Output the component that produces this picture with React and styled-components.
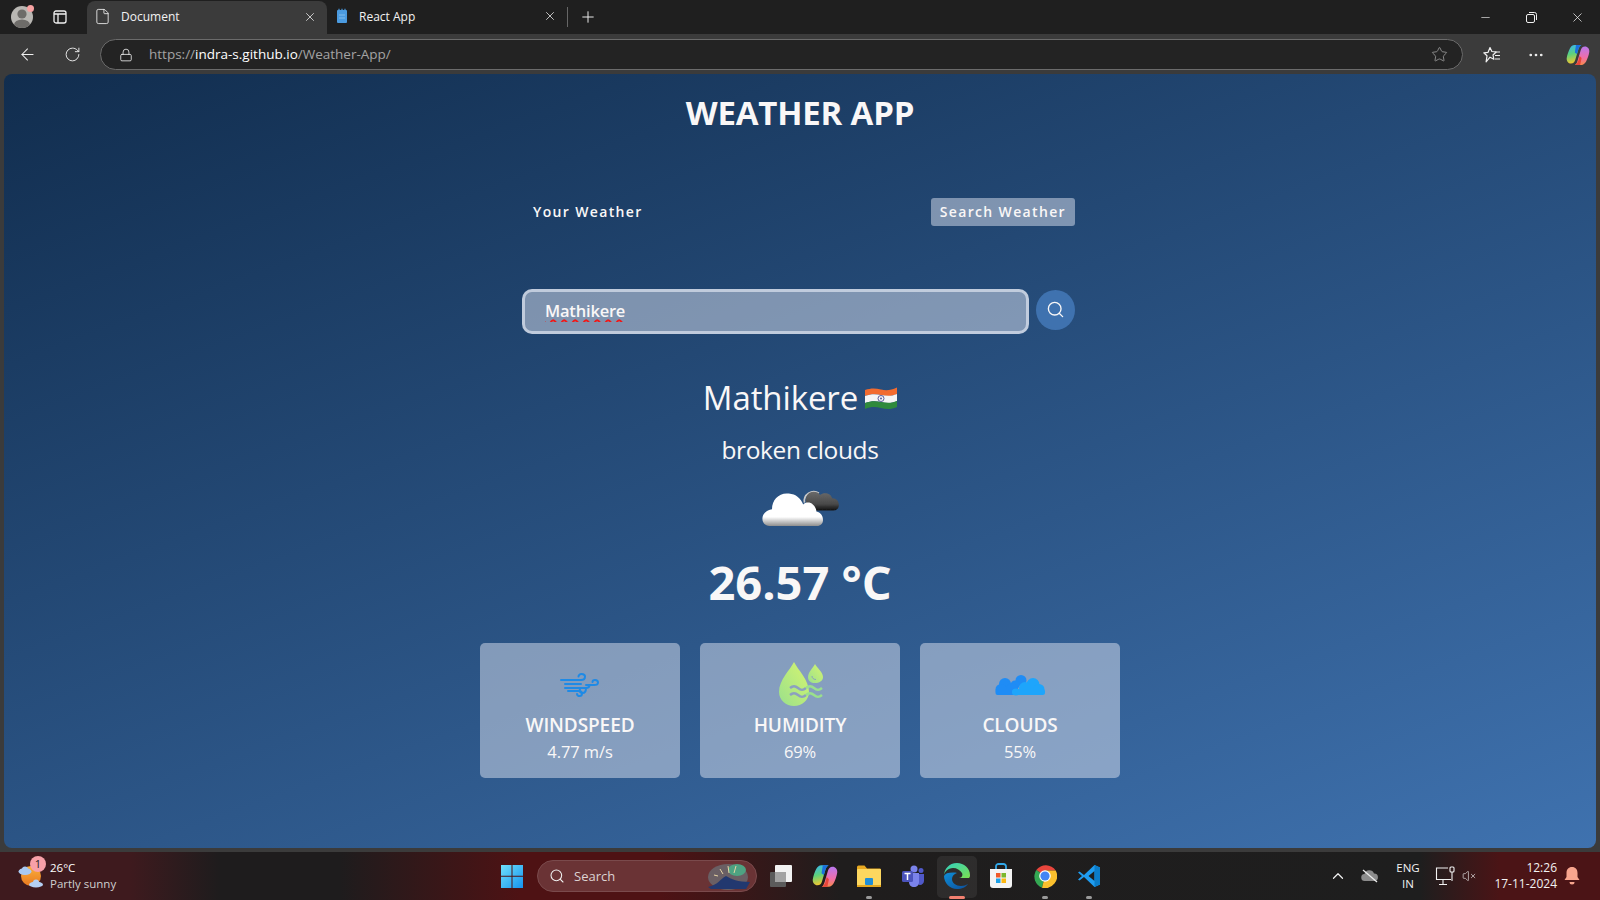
import React from "react";
import styled, { createGlobalStyle } from "styled-components";
import { ArrowLeft, RotateCw, Star, MoreHorizontal, Plus, X, Minus, Search, ChevronUp, VolumeX, File, Lock } from "lucide-react";

const Global = createGlobalStyle`
  * { box-sizing: border-box; }
  html, body { margin: 0; padding: 0; height: 100%; overflow: hidden; background: #3b3b3b; }
  body { font-family: "Open Sans", "Noto Sans", sans-serif; }
`;

const Screen = styled.div`
  width: 1600px; height: 900px; display: flex; flex-direction: column; background: #3b3b3b; color: #fff;
`;
const TabStrip = styled.div`
  height: 34px; background: #1f1f1f; display: flex; align-items: stretch; flex: none;
`;
const Avatar = styled.div`
  position: relative; width: 22px; height: 22px; margin: 6px 0 0 11px; border-radius: 50%; background: #b9b7b3; overflow: hidden; flex: none;
`;
const AvatarWrap = styled.div`position: relative; flex: none; width: 44px;`;
const AvatarDot = styled.span`
  position: absolute; left: 27px; top: 5px; width: 7px; height: 7px; border-radius: 50%; background: #f7a3a3;
`;
const IconSlot = styled.div`
  width: ${p => p.$w || 32}px; display: flex; align-items: center; justify-content: center; flex: none; color: ${p => p.$c || "#f0f0f0"};
`;
const Tab = styled.div`
  width: 240px; flex: none; display: flex; align-items: center; font-size: 12px; color: #f2f2f2; padding: 0 10px 2px ${p => p.$active ? 7 : 9}px;
  background: ${p => p.$active ? "#3b3b3b" : "transparent"}; border-radius: 8px 8px 0 0; gap: ${p => p.$active ? 10 : 11}px;
  margin-top: ${p => p.$active ? 1 : 0}px;
  span { flex: 1; }
`;
const TabSep = styled.div`width: 1px; height: 20px; background: #666; align-self: center; margin-right: 4px; flex: none;`;
const Spacer = styled.div`flex: 1;`;
const AddressRow = styled.div`
  height: 40px; flex: none; display: flex; align-items: center; padding-top: 1px; background: #3b3b3b;
`;
const AddressPill = styled.div`
  width: 1363px; height: 31px; flex: none; border-radius: 16px; border: 1px solid #6b6b6b; background: #232323; display: flex; align-items: center;
  padding: 0 14px 0 18px; font-size: 13.5px; color: #a4a4a4; margin-left: 11px;
  strong { font-weight: 400; color: #fff; }
`;
const UrlText = styled.div`flex: 1; margin-left: 16px; padding-bottom: 2px;`;

const Page = styled.main`
  flex: none; height: 774px; margin: 0 4px; border-radius: 8px; overflow: hidden; color: #f9f7f7;
  background: linear-gradient(160deg, #112d4e, #3f72af); display: flex; flex-direction: column; align-items: center;
  font-family: "Open Sans", sans-serif;
`;
const Title = styled.h1`
  margin: 20px 0 0; font-size: 33px; line-height: 38px; font-weight: 700; letter-spacing: -0.2px;
`;
const TabsRow = styled.div`
  width: 553px; margin: 66px 3px 0 0; height: 28px; display: flex; justify-content: space-between; align-items: center;
`;
const ModeTab = styled.button`
  border: 0; height: 28px; border-radius: 3px; color: #f9f7f7; font: 600 14px/28px "Open Sans", sans-serif; letter-spacing: 1.35px;
  padding: 0 9px 0 ${p => p.$active ? 9 : 11}px;
  background: ${p => p.$active ? "rgba(219,226,239,.5)" : "transparent"};
`;
const SearchForm = styled.form`
  width: 553px; margin: 63px 3px 0 0; display: flex; align-items: flex-start; gap: 7px; height: 45px;
`;
const SearchInput = styled.input`
  width: 507px; height: 45px; border-radius: 10px; border: 3px solid rgba(219,226,239,.72); background: rgba(219,226,239,.5); outline: 0; color: #f9f7f7;
  font: 600 16.5px "Open Sans", sans-serif; padding: 0 0 2px 20px; letter-spacing: -0.2px;
  text-decoration: underline wavy #f01818 1.5px; text-underline-offset: 2px;
`;
const SearchBtn = styled.button`
  width: 39px; height: 40px; margin-top: 1px; border: 0; padding: 0 0 2px 0; border-radius: 50%; background: #3f72af; color: #f9f7f7; display: flex; align-items: center; justify-content: center;
`;
const City = styled.h2`
  margin: 44px 0 0; font-size: 33px; line-height: 40px; font-weight: 400; display: flex; align-items: center; gap: 7px; letter-spacing: -0.1px;
`;
const Desc = styled.p`margin: 16px 0 0; font-size: 24.5px; line-height: 32px; letter-spacing: -0.4px;`;
const WeatherArt = styled.div`margin-top: 12px; height: 56px; display: flex;`;
const Temp = styled.p`margin: 20px 0 0; font-size: 47px; line-height: 56px; font-weight: 700; letter-spacing: 0;`;
const Cards = styled.div`margin-top: 33px; display: flex; gap: 20px;`;
const Card = styled.div`
  width: 200px; height: 135px; border-radius: 5px; background: rgba(219,226,239,.5); display: flex; flex-direction: column; align-items: center; padding-top: 17px;
`;
const CardLabel = styled.div`margin-top: 3px; font-size: 19px; line-height: 28px; font-weight: 600; letter-spacing: -0.1px;`;
const CardValue = styled.div`font-size: 16.5px; line-height: 26px; letter-spacing: -0.1px;`;

const Taskbar = styled.footer`
  margin-top: 4px; height: 48px; flex: none; display: grid; grid-template-columns: 1fr auto 1fr; align-items: center;
  background: linear-gradient(90deg, #3e1a1e 0, #3e1a1e 130px, #1e1c1d 220px, #1e1c1d 340px, #4e1214 520px, #4e1214 660px, #1f1d1d 840px, #1e1e1e 1420px, #4b1416 1500px, #4b1416 1600px);
  font-family: "Open Sans", sans-serif;
`;
const Widget = styled.div`display: flex; align-items: center; padding-left: 18px; gap: 6px;`;
const WidgetIcon = styled.div`position: relative; width: 26px; height: 28px;`;
const Badge = styled.span`
  position: absolute; left: 12px; top: -6px; width: 16px; height: 16px; border-radius: 50%; background: #f7a0a8; color: #222; font-size: 11px; line-height: 16px; text-align: center;
`;
const WidgetText = styled.div`font-size: 11.5px; line-height: 16px; color: #fff; span { display: block; color: #cfcfcf; }`;
const CenterIcons = styled.div`display: flex; align-items: center; height: 48px;`;
const TaskSlot = styled.div`
  position: relative; width: 44px; height: 48px; display: flex; align-items: center; justify-content: center; flex: none;
  &::before { content: ""; display: ${p => p.$on ? "block" : "none"}; position: absolute; left: 2px; right: 2px; top: 4px; bottom: 2px; border-radius: 5px; background: rgba(255,255,255,.07); }
  &::after { content: ""; display: ${p => p.$dot ? "block" : "none"}; position: absolute; bottom: 1px; left: 50%; transform: translateX(-50%); height: 3px; border-radius: 2px;
    width: ${p => p.$on ? 16 : 6}px; background: ${p => p.$on ? "#f28070" : "#9a9a9a"}; }
  svg { position: relative; }
`;
const StartSlot = styled(TaskSlot)`padding-left: 1px;`;
const SearchPill = styled.div`
  width: 220px; height: 32px; margin: 0 2px 0 4px; border-radius: 16px; background: #6a3335; border: 1px solid #7a4a4c; display: flex; align-items: center; padding-left: 11px; gap: 9px;
  font-size: 13px; color: #dcd2d2; overflow: hidden; span { flex: 1; }
`;
const Tray = styled.div`display: flex; align-items: center; justify-content: flex-end; padding-right: 14px; height: 48px;`;
const TraySlot = styled.div`width: ${p => p.$w}px; display: flex; align-items: center; justify-content: center; flex: none; color: #f2f2f2;`;
const Lang = styled.div`font-size: 11.5px; line-height: 16px; text-align: center; color: #f2f2f2;`;
const Clock = styled.div`width: 81px; text-align: right; font-size: 12px; line-height: 16px; color: #f2f2f2;`;

const Profile = () => (
  <svg width="22" height="22" viewBox="0 0 22 22"><circle cx="11" cy="8" r="4.6" fill="#6e6c69"/><ellipse cx="11" cy="19" rx="8" ry="5.5" fill="#6e6c69"/></svg>
);
const SideTabs = () => (
  <svg width="16" height="16" viewBox="0 0 16 16" fill="none" stroke="#f0f0f0" strokeWidth="1.3"><rect x="2" y="2" width="12" height="12" rx="2"/><path d="M2 5h12M6 5v9"/></svg>
);
const ReactFav = () => (
  <svg width="12" height="16" viewBox="0 0 12 16"><rect x="1" y="2" width="10" height="13" rx="1" fill="#4b9be0"/><path d="M3 3V0.8M6 3V0.8M9 3V0.8" stroke="#4b9be0" strokeWidth="1.2"/><path d="M3 7h6M3 10h6" stroke="#9ccbf2" strokeWidth=".7"/></svg>
);
const Restore = () => (
  <svg width="11" height="11" viewBox="0 0 11 11" fill="none" stroke="#f0f0f0"><rect x=".5" y="2.5" width="8" height="8" rx="1.5"/><path d="M3 .5h5.5a2 2 0 0 1 2 2V8"/></svg>
);
const FavList = () => (
  <svg width="18" height="18" viewBox="0 0 18 18" fill="none" stroke="#f0f0f0" strokeWidth="1.2"><path d="M7 1.5l1.9 4 4.3.5-3.2 3 .9 4.3L7 11.2 3.1 15.8l.9-6-3.2-3 4.3-.5z" strokeLinejoin="round"/><path d="M12 6h5M12 9.5h5M12 13h5"/></svg>
);
const CopilotLogo = ({ size = 24, id = "a" }) => (
  <svg width={size} height={size} viewBox="0 0 24 24">
    <defs>
      <linearGradient id={"cpa" + id} x1="0.2" y1="0" x2="0.4" y2="1"><stop offset="0" stopColor="#38b6ee"/><stop offset=".5" stopColor="#5ed27a"/><stop offset="1" stopColor="#f5c62e"/></linearGradient>
      <linearGradient id={"cpb" + id} x1="0.5" y1="0" x2="0.5" y2="1"><stop offset="0" stopColor="#b977ee"/><stop offset=".6" stopColor="#f06ea8"/><stop offset="1" stopColor="#f88a4a"/></linearGradient>
    </defs>
    <path d="M8.500 2H15c-1.500 1-2.200 3-2.800 5l-3 10c-.5 1.800-1.800 3.500-4.200 3.500-2.600 0-4.600-2.300-4.300-5.300.4-3.400 2-7.500 3.300-10C5.300 3.200 6.600 2 8.500 2z" fill={`url(#cpa${id})`}/>
    <path d="M15.500 22H9c1.500-1 2.200-3 2.800-5l3-10c.5-1.800 1.800-3.500 4.200-3.500 2.600 0 4.600 2.300 4.300 5.300-.4 3.400-2 7.500-3.300 10-1.300 2-2.600 3.200-4.500 3.200z" fill={`url(#cpb${id})`}/>
    <path d="M10 2h5.500c-1.500 1-2.600 2.500-3.200 4.500L11 11 8.800 9.500z" fill="#1a6fe0"/>
    <path d="M9 22c1.500-.8 2.700-2.300 3.300-4.200L13.600 13 15.600 15l-1.400 7z" fill="#e8463a"/>
  </svg>
);
const Flag = () => (
  <svg width="32" height="24" viewBox="0 0 32 24">
    <path d="M0 4c6-2 10-2 16-.5S26 4 32 1.5V8c-6 2.5-10 2.5-16 1S6 8 0 10z" fill="#f26b2f"/>
    <path d="M0 10c6-2 10-2 16-1s10 1.5 16-1v7c-6 2.5-10 2.5-16 1S6 15 0 17z" fill="#f5f5f5"/>
    <path d="M0 17c6-2 10-2 16-1s10 1.5 16-1v6c-6 2.5-10 2.5-16 1S6 20.500 0 23z" fill="#2f8a3c"/>
    <circle cx="16" cy="12.500" r="3" fill="none" stroke="#5a5a9c" strokeWidth="1"/><circle cx="16" cy="12.500" r="1" fill="#5a5a9c"/>
  </svg>
);
const BrokenClouds = () => (
  <svg width="80" height="56" viewBox="0 4 72 50">
    <defs>
      <linearGradient id="wc" x1="0" y1="0" x2="0" y2="1"><stop offset="0" stopColor="#fff"/><stop offset=".72" stopColor="#fff"/><stop offset="1" stopColor="#8e8e8e"/></linearGradient>
      <linearGradient id="dc" x1="0" y1="0" x2="0" y2="1"><stop offset="0" stopColor="#6a6a6a"/><stop offset=".65" stopColor="#4a4a4a"/><stop offset="1" stopColor="#111"/></linearGradient>
      <filter id="sb"><feGaussianBlur stdDeviation=".6"/></filter>
    </defs>
    <g filter="url(#sb)">
      <g transform="translate(2 0)">
        <path d="M38 26a8.500 8.500 0 0 1 13-8.500" fill="none" stroke="#c9c9c9" strokeWidth="1.500"/>
        <path d="M40 20c2-5 10-5 12-1 4-3 10-1 11 3 4 0 6 3 6 6 0 3-2 5-5 5H46c-6 0-8-9-6-13z" fill="url(#dc)"/>
      </g>
      <path transform="translate(0 -3.760) scale(1.080)" d="M8 47c-4 0-6-3-6-6 0-4 3-7 8-8 0-8 6-14 14-13 6 .5 10 4 12 9 2-2 6-2 8 0 2 1.500 3 4 3 6 4 1 5.500 4 5.500 7s-2 5-5 5H8z" fill="url(#wc)"/>
    </g>
  </svg>
);
const WindIcon = () => (
  <svg width="48" height="48" viewBox="0 0 48 48" fill="none" strokeWidth="2" strokeLinecap="round">
    <g stroke="#1e8ae6">
      <path d="M5 20h20c3 0 4-2 4-3.500S27.500 14 25.500 14s-3 1.500-3 2.500"/>
      <path d="M9 24h16"/>
      <path d="M30 25h8c2.500 0 4-1 4-2.500S40.500 20 39 20s-2.500 1-2.500 2"/>
      <path d="M9 28h21c2 0 3.500-1 3.500-3"/>
      <path d="M30 28c0 3-1 5-3.500 5S23 31 24 29"/>
      <path d="M12 31h11c1.500 0 3 1 3 2.500S24.800 36 23.500 36 21 35 21 34"/>
    </g>
  </svg>
);
const HumidityIcon = () => (
  <svg width="48" height="48" viewBox="0 0 48 48" fill="none">
    <defs><linearGradient id="hu" x1="1" y1="0" x2="0" y2="1"><stop offset="0" stopColor="#d6f56f"/><stop offset="1" stopColor="#9ae08c"/></linearGradient></defs>
    <path d="M18 2C14 10 3 20 3 32c0 8 7 14 15 14s15-6 15-14C33 20 22 10 18 2z" fill="url(#hu)"/>
    <path d="M39 4c-2 4-7 8-7 13 0 4 3 6 7 6s8-2 8-6c0-5-6-9-8-13z" fill="url(#hu)"/>
    <path d="M36 16c0 2 1.500 3.500 4 3.500" stroke="#8aa0bf" strokeWidth="1"/>
    <g stroke="#8ca0bf" strokeWidth="2.500"><path d="M14 28c3-2.500 5-2.500 8 0s5 2.500 8 0"/><path d="M14 35c3-2.500 5-2.500 8 0s5 2.500 8 0"/></g>
    <g stroke="#9ae08c" strokeWidth="2.500"><path d="M30 28c3-2.500 5-2.500 8 0s5 2.500 8 0"/><path d="M30 35c3-2.500 5-2.500 8 0s5 2.500 8 0"/></g>
  </svg>
);
const CloudsIcon = () => (
  <svg width="52" height="48" viewBox="0 0 52 48">
    <g fill="#1f8cf5">
      <circle cx="27" cy="20.500" r="5.500"/><circle cx="21" cy="25" r="4.500"/>
      <circle cx="11" cy="24" r="6"/><circle cx="7" cy="29.500" r="5.500"/><circle cx="18" cy="29" r="6"/>
      <rect x="1.500" y="29" width="20" height="6" rx="2"/>
    </g>
    <g fill="#1ea5fb">
      <circle cx="39" cy="24.500" r="6.500"/><circle cx="31" cy="28" r="6"/><circle cx="45" cy="29.500" r="5.500"/><circle cx="22" cy="32" r="3.500"/>
      <rect x="18" y="29" width="33" height="6" rx="2.500"/>
    </g>
  </svg>
);
const WidgetWeather = () => (
  <svg width="26" height="28" viewBox="0 0 26 28">
    <defs><linearGradient id="su" x1="0" y1="0" x2="0" y2="1"><stop offset="0" stopColor="#fbb03b"/><stop offset="1" stopColor="#e8781f"/></linearGradient></defs>
    <circle cx="13" cy="14" r="10" fill="url(#su)"/>
    <ellipse cx="7" cy="9.500" rx="6.500" ry="3.500" fill="#a9c9f2"/>
    <ellipse cx="7" cy="7.500" rx="3" ry="3" fill="#a9c9f2"/>
    <ellipse cx="18" cy="22.500" rx="7" ry="3" fill="#b4d0f4"/>
    <circle cx="18" cy="20.500" r="3" fill="#b4d0f4"/>
  </svg>
);
const WinLogo = () => (
  <svg width="22" height="24" viewBox="0 0 22 24">
    <defs><linearGradient id="wl" x1="0" y1="0" x2="1" y2="1"><stop offset="0" stopColor="#6fe0fb"/><stop offset="1" stopColor="#1593ef"/></linearGradient></defs>
    <path d="M0 1h10.500v10.800H0zM11.500 1H22v10.800H11.500zM0 12.800h10.500V24H0zM11.500 12.800H22V24H11.500z" fill="url(#wl)"/>
  </svg>
);
const SearchArt = () => (
  <svg width="50" height="32" viewBox="0 0 50 32">
    <ellipse cx="22" cy="17" rx="20" ry="13" fill="#6a5f64"/>
    <ellipse cx="31" cy="10" rx="9" ry="6" fill="#4ea382"/>
    <path d="M2 27c10-2 12-8 18-11 5 3 12 6 24 6l-4 7H5z" fill="#22386f"/>
    <path d="M8 15l4 1M14 9l3 5M22 6l1 7M30 6l-2 7" stroke="#e8d5a5" strokeWidth="1"/>
  </svg>
);
const TaskView = () => (
  <svg width="24" height="24" viewBox="0 0 24 24"><rect x="1" y="8" width="16" height="15" rx="1" fill="#5b5b5b"/><rect x="6" y="1" width="17" height="17" rx="1" fill="#f2f2f2"/><rect x="6" y="8" width="11" height="10" fill="#a3a3a3"/></svg>
);
const Explorer = () => (
  <svg width="26" height="24" viewBox="0 0 26 24">
    <path d="M1 3a1.500 1.500 0 0 1 1.500-1.500h6l2.500 3h13A1.500 1.500 0 0 1 25 6v3H1z" fill="#e8a921"/>
    <rect x="1" y="5" width="24" height="18" rx="1" fill="#fdd75f"/>
    <rect x="1" y="21" width="24" height="2" fill="#e5a81f"/>
    <rect x="9" y="14" width="8" height="7" rx="1" fill="#1f8ed8"/>
  </svg>
);
const Teams = () => (
  <svg width="24" height="22" viewBox="0 0 24 22">
    <circle cx="13" cy="4" r="3.500" fill="#7b83eb"/><circle cx="20" cy="5.500" r="2.500" fill="#5059c9"/>
    <path d="M17 9h6v7c0 2-2 4-4 4s-2-1-2-2z" fill="#5059c9"/>
    <path d="M8 8h10v9c0 3-2 5-5 5s-5-2-5-5z" fill="#7b83eb"/>
    <rect x="1" y="6" width="11" height="11" rx="1.500" fill="#4b53bc"/>
    <path d="M3.500 8.500h6M6.500 8.500V15" stroke="#fff" strokeWidth="1.500"/>
  </svg>
);
const Edge = () => (
  <svg width="26" height="26" viewBox="0 0 26 26">
    <defs>
      <linearGradient id="eg" x1="0" y1="0" x2="1" y2="1"><stop offset="0" stopColor="#2fd0c3"/><stop offset="1" stopColor="#7be04f"/></linearGradient>
      <linearGradient id="eb" x1="0" y1="0" x2="1" y2="1"><stop offset="0" stopColor="#0f8fd8"/><stop offset="1" stopColor="#0c4f9c"/></linearGradient>
    </defs>
    <path d="M13 0C5 0 0 6 0 13c0-4 4-8 9-8 4 0 7 2 9 5 1 2 0 5-3 5h10c1-1 1-2 1-3C26 5 20 0 13 0z" fill="url(#eg)"/>
    <path d="M0 13c0 7 6 13 13 13 5 0 9-2 11-5-2 1-4 2-7 2-5 0-9-3-9-7 0-3 2-5 5-6-1-.5-2-.5-4-.500C4 9.500 1 10.500 0 13z" fill="url(#eb)"/>
  </svg>
);
const Store = () => (
  <svg width="24" height="26" viewBox="0 0 24 26">
    <path d="M7 6V3.500A2.500 2.500 0 0 1 9.500 1h5A2.500 2.500 0 0 1 17 3.500V6" fill="none" stroke="#32a8e8" strokeWidth="1.800"/>
    <path d="M1 6h22v16a3 3 0 0 1-3 3H4a3 3 0 0 1-3-3z" fill="#f4f4f4"/>
    <rect x="7" y="10" width="4.500" height="4.500" fill="#f05a2a"/><rect x="12.500" y="10" width="4.500" height="4.500" fill="#7cb82f"/>
    <rect x="7" y="15.500" width="4.500" height="4.500" fill="#1da1e8"/><rect x="12.500" y="15.500" width="4.500" height="4.500" fill="#fdb813"/>
  </svg>
);
const Chrome = () => (
  <svg width="24" height="24" viewBox="0 0 24 24">
    <path d="M12 12L3.300 6A12 12 0 0 1 22.700 6.500H12z" fill="#e8453c"/>
    <path d="M12 12L3.300 6A12 12 0 0 0 9 23.700z" fill="#34a853"/>
    <path d="M12 12l-3 11.700A12 12 0 0 0 22.700 6.500H12z" fill="#fbc02d"/>
    <circle cx="12" cy="12" r="5.800" fill="#fff"/><circle cx="12" cy="12" r="4.600" fill="#4285f4"/>
  </svg>
);
const VSCode = () => (
  <svg width="24" height="24" viewBox="0 0 24 24">
    <path d="M17.500 1L23 3.500v17L17.500 23 7 13l-4.500 3.500L1 15.500 5 12 1 8.500 2.500 7.500 7 11z" fill="#1f9cf0"/>
    <path d="M17.500 7l-6 5 6 5z" fill="#1e1e1e"/>
    <path d="M17.500 1L23 3.500v17L17.500 23z" fill="#0a7cc9"/>
  </svg>
);
const CloudOff = () => (
  <svg width="18" height="14" viewBox="0 0 18 14"><path d="M4 12a3.500 3.500 0 0 1-.5-7A5 5 0 0 1 13 4.500 3.800 3.800 0 0 1 14 12z" fill="#8c8c8c"/><path d="M2 1l14 12" stroke="#ececec" strokeWidth="1.300"/></svg>
);
const Monitor = () => (
  <svg width="22" height="20" viewBox="0 0 22 20" fill="none" stroke="#f2f2f2" strokeWidth="1.100"><path d="M13 2H1.500v11.500H16"/><path d="M8 14v4M4 18.500h8"/><rect x="15" y="1" width="4" height="5" rx="1"/><path d="M17 6v9"/></svg>
);
const Bell = () => (
  <svg width="16" height="18" viewBox="0 0 16 18" fill="#f8a58e"><path d="M8 0c3.500 0 5.500 2.500 5.500 6v4l2 3H.5l2-3V6C2.500 2.500 4.500 0 8 0z"/><path d="M5.500 15h5a2.500 2.500 0 0 1-5 0z"/></svg>
);

export default function App() {
  return (
    <Screen>
      <Global />
      <TabStrip>
        <AvatarWrap>
          <Avatar><Profile /></Avatar>
          <AvatarDot />
        </AvatarWrap>
        <IconSlot $w={32}><SideTabs /></IconSlot>
        <IconSlot $w={11} />
        <Tab $active><File size={17} strokeWidth={1.2} /><span>Document</span><X size={14} strokeWidth={1.3} /></Tab>
        <Tab><ReactFav /><span>React App</span><X size={14} strokeWidth={1.3} /></Tab>
        <TabSep />
        <IconSlot $w={32}><Plus size={18} strokeWidth={1.3} /></IconSlot>
        <Spacer />
        <IconSlot $w={46}><Minus size={13} strokeWidth={1.2} /></IconSlot>
        <IconSlot $w={46}><Restore /></IconSlot>
        <IconSlot $w={46}><X size={15} strokeWidth={1.2} /></IconSlot>
      </TabStrip>
      <AddressRow>
        <IconSlot $w={55}><ArrowLeft size={19} strokeWidth={1.3} /></IconSlot>
        <IconSlot $w={34}><RotateCw size={17} strokeWidth={1.3} /></IconSlot>
        <AddressPill>
          <Lock size={14} strokeWidth={1.4} color="#f0f0f0" />
          <UrlText>https://<strong>indra-s.github.io</strong>/Weather-App/</UrlText>
          <Star size={17} strokeWidth={1.2} color="#9a9a9a" />
        </AddressPill>
        <IconSlot $w={58}><FavList /></IconSlot>
        <IconSlot $w={30}><MoreHorizontal size={18} strokeWidth={1.6} /></IconSlot>
        <IconSlot $w={54}><CopilotLogo id="top" /></IconSlot>
      </AddressRow>

      <Page>
        <Title>WEATHER APP</Title>
        <TabsRow>
          <ModeTab type="button">Your Weather</ModeTab>
          <ModeTab type="button" $active>Search Weather</ModeTab>
        </TabsRow>
        <SearchForm onSubmit={e => e.preventDefault()}>
          <SearchInput defaultValue="Mathikere" spellCheck={false} />
          <SearchBtn type="button" aria-label="search"><Search size={19} strokeWidth={1.7} /></SearchBtn>
        </SearchForm>
        <City>Mathikere <Flag /></City>
        <Desc>broken clouds</Desc>
        <WeatherArt><BrokenClouds /></WeatherArt>
        <Temp>26.57 °C</Temp>
        <Cards>
          <Card><WindIcon /><CardLabel>WINDSPEED</CardLabel><CardValue>4.77 m/s</CardValue></Card>
          <Card><HumidityIcon /><CardLabel>HUMIDITY</CardLabel><CardValue>69%</CardValue></Card>
          <Card><CloudsIcon /><CardLabel>CLOUDS</CardLabel><CardValue>55%</CardValue></Card>
        </Cards>
      </Page>

      <Taskbar>
        <Widget>
          <WidgetIcon><WidgetWeather /><Badge>1</Badge></WidgetIcon>
          <WidgetText>26°C<span>Partly sunny</span></WidgetText>
        </Widget>
        <CenterIcons>
          <StartSlot><WinLogo /></StartSlot>
          <SearchPill><Search size={16} strokeWidth={1.6} color="#eee" /><span>Search</span><SearchArt /></SearchPill>
          <TaskSlot><TaskView /></TaskSlot>
          <TaskSlot><CopilotLogo size={26} id="bar" /></TaskSlot>
          <TaskSlot $dot><Explorer /></TaskSlot>
          <TaskSlot><Teams /></TaskSlot>
          <TaskSlot $dot $on><Edge /></TaskSlot>
          <TaskSlot><Store /></TaskSlot>
          <TaskSlot $dot><Chrome /></TaskSlot>
          <TaskSlot $dot><VSCode /></TaskSlot>
        </CenterIcons>
        <Tray>
          <TraySlot $w={32}><ChevronUp size={18} strokeWidth={1.6} /></TraySlot>
          <TraySlot $w={32}><CloudOff /></TraySlot>
          <TraySlot $w={44}><Lang>ENG<br />IN</Lang></TraySlot>
          <TraySlot $w={32}><Monitor /></TraySlot>
          <TraySlot $w={14}><VolumeX size={16} strokeWidth={1.1} /></TraySlot>
          <Clock>12:26<br />17-11-2024</Clock>
          <TraySlot $w={29}><Bell /></TraySlot>
        </Tray>
      </Taskbar>
    </Screen>
  );
}
